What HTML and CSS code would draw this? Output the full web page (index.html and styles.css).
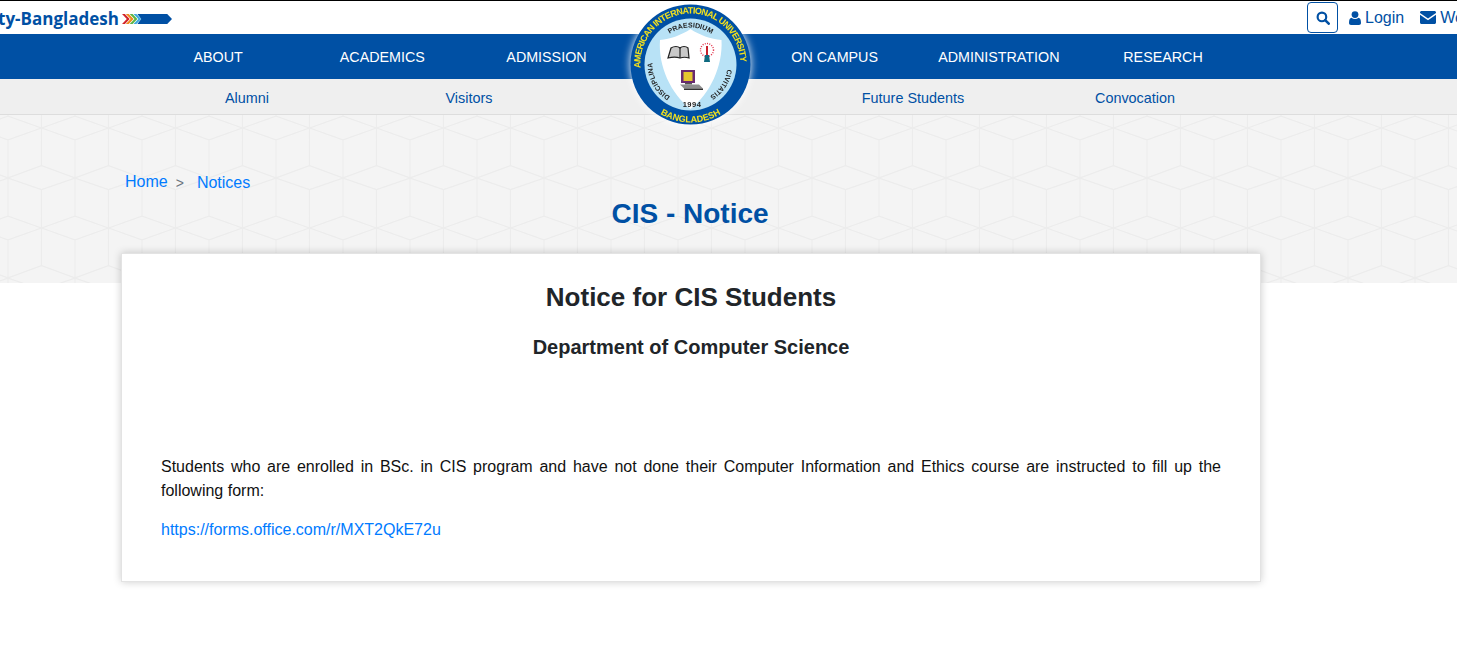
FILE: index.html
```html
<!DOCTYPE html>
<html lang="en">
<head>
	<meta charset="UTF-8">
	<title>CIS - Notice</title>
	<link rel="stylesheet" href="styles.css">
</head>
<body>
	<div class="top">
		<div class="brand">
			<span class="brand-text">ty-Bangladesh</span>
			<svg class="brand-arrow" width="50" height="12" viewBox="0 0 52 13" preserveAspectRatio="none">
				<path d="M16 1h31l5 5.500-5 5.500H16l4-5.500z" fill="#0050a4"/>
				<path d="M12 1l5 5.500-5 5.500h3l5-5.500-5-5.500z" fill="#3fa9e0"/>
				<path d="M8 1l5 5.500-5 5.500h3l5-5.500-5-5.500z" fill="#5cb545"/>
				<path d="M4 1l5 5.500-5 5.500h3l5-5.500-5-5.500z" fill="#f08a1d"/>
				<path d="M0 1l5 5.500-5 5.500h3l5-5.500-5-5.500z" fill="#d2232a"/>
			</svg>
		</div>
		<div class="tools">
			<a class="search-btn" href="#">
				<svg width="14" height="14" viewBox="0 0 13 13"><circle cx="5.500" cy="5.500" r="4" fill="none" stroke="#0050a4" stroke-width="2"/><path d="M8.500 8.500l3.300 3.300" stroke="#0050a4" stroke-width="2.400" stroke-linecap="round"/></svg>
			</a>
			<a class="tool" href="#">
				<svg width="12" height="14" viewBox="0 0 12 14"><circle cx="6" cy="3.600" r="3.400" fill="#0050a4"/><path d="M0 12c0-3.500 1-5 2.500-5.200C3.500 7.600 4.600 8 6 8s2.500-.4 3.500-1.200C11 7 12 8.500 12 12c0 1.200-.8 2-2 2H2c-1.200 0-2-.8-2-2z" fill="#0050a4"/></svg>
				Login
			</a>
			<a class="tool tool-mail" href="#">
				<svg width="16" height="13" viewBox="0 0 16 13"><path d="M1.500 0h13c.8 0 1.500.7 1.500 1.500v.6L8 7.500 0 2.100v-.6C0 .7.700 0 1.500 0z" fill="#0050a4"/><path d="M0 3.800L8 9.200l8-5.400v7.700c0 .8-.7 1.500-1.500 1.500h-13C.7 13 0 12.300 0 11.500z" fill="#0050a4"/></svg>
				Webmail
			</a>
		</div>
	</div>

	<div class="nav">
		<a href="#">ABOUT</a>
		<a href="#">ACADEMICS</a>
		<a href="#">ADMISSION</a>
		<span class="logo-gap"></span>
		<a href="#">ON CAMPUS</a>
		<a href="#">ADMINISTRATION</a>
		<a href="#">RESEARCH</a>
	</div>

	<div class="subnav">
		<a href="#">Alumni</a>
		<a href="#">Visitors</a>
		<span></span>
		<a href="#">Future Students</a>
		<a href="#">Convocation</a>
	</div>

	<svg class="logo" width="140" height="130" viewBox="0 0 140 130">
		<defs>
			<path id="ringTop" d="M 20.700 68 A 50 50 0 1 1 120.300 68"/>
			<path id="ringBottom" d="M 20.300 93.500 A 58 58 0 0 0 120.700 93.500"/>
			<path id="mottoTop" d="M 48 35 A 37.500 37.500 0 0 1 93 35"/>
			<path id="mottoLeft" d="M 51.500 97.400 A 38 38 0 0 1 32.600 61.200"/>
			<path id="mottoRight" d="M 107.100 69.600 A 37 37 0 0 1 90.100 95.900"/>
		</defs>
		<circle cx="70.500" cy="64.500" r="60" fill="#0050a4"/>
		<circle cx="70.500" cy="64.500" r="46" fill="#b8e2f6"/>
		<path d="M40 40C50 39 62 35 70.500 29 79 35 91 39 101.500 40 103 66 90 94 70.500 109 51 94 38 66 40 40z" fill="#fff"/>

		<text class="ring-text"><textPath href="#ringTop" textLength="160">AMERICAN INTERNATIONAL UNIVERSITY</textPath></text>
		<text class="ring-text"><textPath href="#ringBottom" startOffset="50%" text-anchor="middle">BANGLADESH</textPath></text>

		<text class="motto"><textPath href="#mottoTop" startOffset="50%" text-anchor="middle">PRAESIDIUM</textPath></text>
		<text class="motto"><textPath href="#mottoLeft" startOffset="50%" text-anchor="middle">DISCIPLINA</textPath></text>
		<text class="motto"><textPath href="#mottoRight" startOffset="50%" text-anchor="middle">CIVITATIS</textPath></text>
		<text class="motto motto-year" x="72" y="107" text-anchor="middle">1994</text>

		<!-- book -->
		<path d="M48 58l3-10c3-2 7-2 9 0 2-2 6-2 8 0l1 10c-3-1-6-1-9 0-3-1-8-1-12 0z" fill="#c9c9c9" stroke="#222" stroke-width="1.200"/>
		<path d="M60 48v10" stroke="#222" stroke-width="1.200"/>
		<!-- torch -->
		<circle cx="87" cy="50" r="6.500" fill="none" stroke="#e3324a" stroke-width="1.400" stroke-dasharray="1 1.300"/>
		<path d="M86 46h2v9h-2z" fill="#c8202c"/>
		<path d="M85 55h4l1 7h-6z" fill="#0e6a80"/>
		<!-- computer -->
		<path d="M61 70h14v13H61z" fill="#6a2a6e"/>
		<path d="M63.500 72h9v9h-9z" fill="#e5c62e"/>
		<path d="M65 83h7v1.500h-7z" fill="#555"/>
		<path d="M60 84.500h19l4 4H64z" fill="#8d8d8d"/>
		<path d="M64 88.500h19V90H64z" fill="#333"/>
	</svg>

	<div class="band">
		<div class="crumbs">
			<a class="crumb-home" href="#">Home</a>
			<span class="crumb-sep">&gt;</span>
			<a class="crumb-last" href="#">Notices</a>
		</div>
		<h1 class="page-title">CIS - Notice</h1>
	</div>

	<div class="card">
		<h2 class="card-title">Notice for CIS Students</h2>
		<h3 class="card-sub">Department of Computer Science</h3>
		<p class="card-text">Students who are enrolled in BSc. in CIS program and have not done their Computer Information and Ethics course are instructed to fill up the following form:</p>
		<p class="card-link"><a href="#">https://forms.office.com/r/MXT2QkE72u</a></p>
	</div>
</body>
</html>
```

FILE: styles.css
```css
html, body {margin: 0; padding: 0; overflow-x: hidden;}
body {position: relative; min-height: 657px; background: #fff; font-family: "Liberation Sans", Arial, sans-serif; font-size: 16px; color: #212529; border-top: 1px solid #000;}
a {text-decoration: none;}

.top {display: flex; justify-content: space-between; height: 33px; white-space: nowrap;}
.brand {display: flex; align-items: center; margin-left: -2px; padding-top: 2px; box-sizing: border-box; height: 33px;}
.brand-text {font-family: "Open Sans", sans-serif; font-weight: 700; font-size: 17px; color: #0050a4;}
.brand-arrow {margin-left: 3px; margin-top: 1px;}
.tools {display: flex; align-items: center; margin-right: -80px; width: 230px; flex: none;}
.search-btn {display: flex; align-items: center; justify-content: center; width: 29px; height: 29px; border: 1px solid #0050a4; border-radius: 4px; margin-right: 11px;}
.tool {display: flex; align-items: center; gap: 4px; color: #0050a4; margin-right: 16px;}

.nav {display: flex; height: 45px; padding-left: 136px; background: #0050a4;}
.nav a {width: 164.200px; line-height: 46px; text-align: center; color: #fff; font-size: 14.300px;}
.logo-gap {width: 124px;}

.subnav {display: flex; height: 35px; padding-left: 136px; background: #efefef; border-bottom: 1px solid #ddd;}
.subnav a, .subnav span {width: 222px; line-height: 38px; text-align: center; color: #0050a4; font-size: 14.400px;}

.logo {position: absolute; left: 620px; top: -1px; filter: drop-shadow(0 0 4px #fff);}
.ring-text {font-size: 9px; font-weight: 700; fill: #f5e21c; font-family: "Liberation Sans", sans-serif;}
.motto {font-size: 7px; font-weight: 700; fill: #222; font-family: "Liberation Sans", sans-serif;}
.motto-year {font-size: 7.500px; letter-spacing: .5px;}

.band {height: 168px; box-sizing: border-box; padding: 57px 0 0 125px; background-color: #f4f4f4; background-position: 7.500px 12.700px; background-size: 67px 100px; background-image: url("data:image/svg+xml,%3Csvg xmlns='http://www.w3.org/2000/svg' width='67' height='100'%3E%3Cpath d='M33.500 0L0 12M33.500 0L67 12M33.500 100L0 88M33.500 100L67 88M33.500 37.600L0 50M33.500 37.600L67 50M0 50L33.500 61.600M67 50L33.500 61.600M33.500 0V37.600M33.500 61.600V100M0 12V88M67 12V88' fill='none' stroke='%23ececec' stroke-width='1.200'/%3E%3C/svg%3E");}
.crumbs {display: flex; align-items: center;}
.crumb-home {color: #007bff;}
.crumb-sep {margin: 2px 0 0 8px; color: #6c757d; font-size: 14px;}
.crumb-last {margin: 2px 0 0 13px; color: #007bff;}
.page-title {width: 1132px; margin: 6px 0 0 -1px; text-align: center; font-size: 28px; line-height: 32px; font-weight: 700; color: #0050a4;}

.card {width: 1060px; margin: -30px 0 76px 121px; padding: 27px 39px 39px; background: #fff; border: 1px solid #e3e3e3; box-shadow: 0 0 8px rgba(0, 0, 0, .2); position: relative;}
.card-title {margin: 0; text-align: center; font-size: 26px; line-height: 32px; font-weight: 700;}
.card-sub {margin: 22px 0 0; text-align: center; font-size: 20px; line-height: 24px; font-weight: 700;}
.card-text {margin: 96px 0 0; text-align: justify; line-height: 24px; color: #111;}
.card-link {margin: 15px 0 0; line-height: 24px;}
.card-link a {color: #007bff;}
```
